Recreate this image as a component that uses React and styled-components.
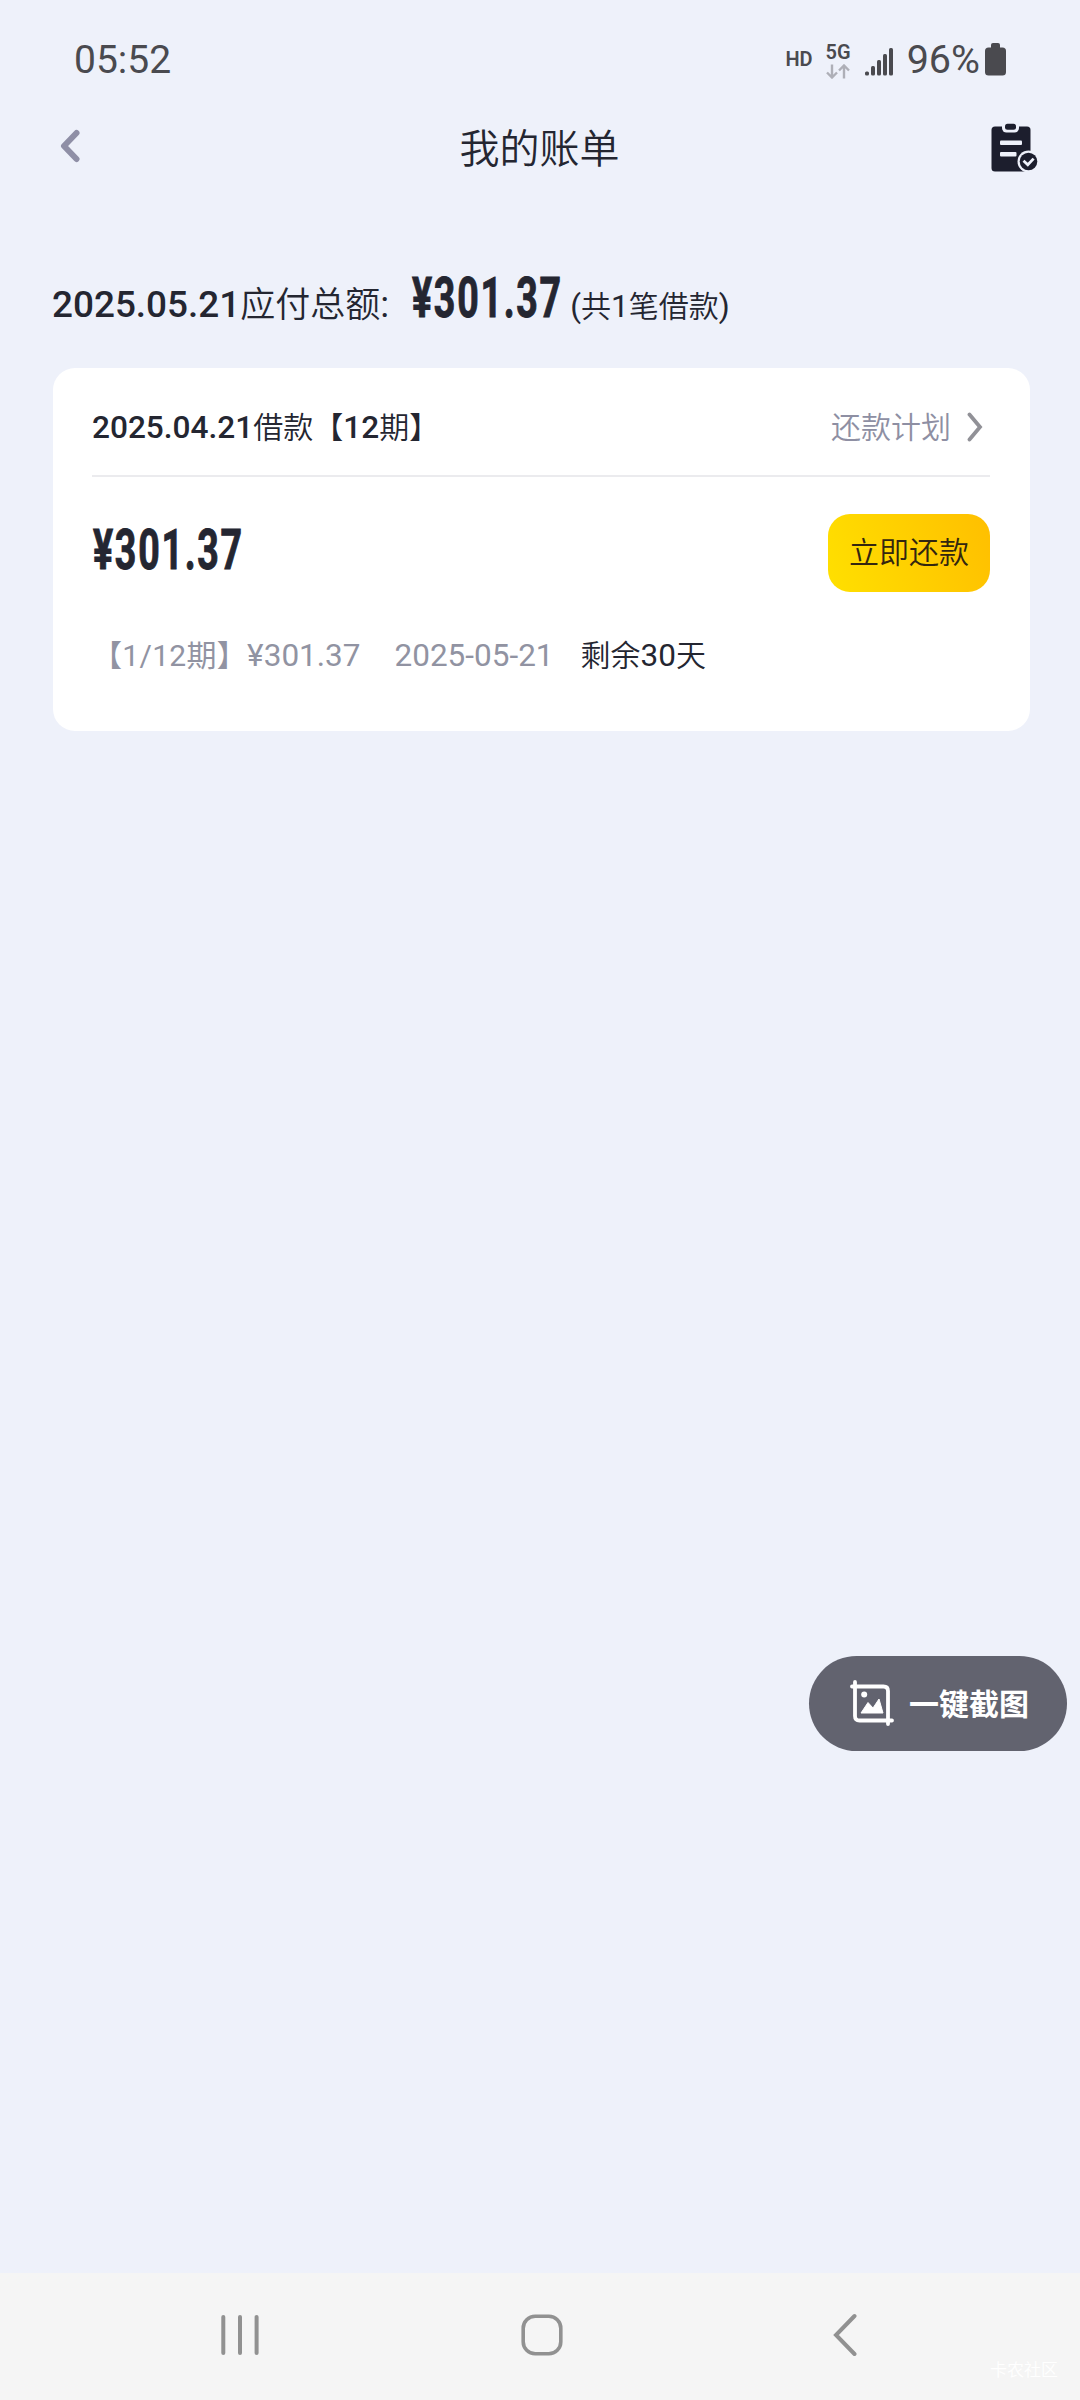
import React from "react";
import styled, { createGlobalStyle } from "styled-components";

const bills = [
  {
    id: 1,
    date: "2025.04.21",
    periods: 12,
    current: 1,
    amount: "301.37",
    dueDate: "2025-05-21",
    daysLeft: 30,
  },
];

const StatusBar = () => (
  <StatusRow>
    <Clock>05:52</Clock>
    <StatusIcons>
      <Label>HD</Label>
      <Network>
        <Label>5G</Label>
        <svg width="24" height="15" viewBox="0 0 24 15" fill="none">
          <path
            d="M6 0.5V13M1 8.5L6 13.5L11 8.5M18 14.5V2M13 6.5L18 1.5L23 6.5"
            stroke="#aeafb7"
            strokeWidth="2.4"
          />
        </svg>
      </Network>
      <Signal width="28" height="28" viewBox="0 0 28 28" fill="#4a4a4f">
        <rect x="0" y="23.5" width="4" height="4" rx="1.5" />
        <rect x="6" y="18" width="4" height="9.5" rx="1.5" />
        <rect x="12" y="12" width="4" height="15.5" rx="1.5" />
        <rect x="18" y="6" width="4" height="21.5" rx="1.5" />
        <rect x="24" y="0" width="4" height="27.5" rx="1.5" />
      </Signal>
      <Percent>96%</Percent>
      <Battery width="21" height="33" viewBox="0 0 21 33" fill="#4a4a4f">
        <rect x="6" y="0" width="9" height="8" rx="2" />
        <rect x="0" y="4.5" width="21" height="28" rx="3.5" />
      </Battery>
    </StatusIcons>
  </StatusRow>
);

const ClipboardIcon = () => (
  <svg width="48" height="50" viewBox="0 0 48 50" fill="#1c1e2d">
    <rect x="0.5" y="3.5" width="39" height="45" rx="3.5" />
    <rect x="11" y="-2" width="17" height="11.5" rx="4.5" fill="#eef1fa" />
    <rect x="14" y="0.8" width="11" height="6" rx="2.5" />
    <rect x="9" y="17.5" width="22" height="4.4" rx="1" fill="#eef1fa" />
    <rect x="9" y="29" width="16.5" height="4.4" rx="1" fill="#eef1fa" />
    <circle cx="37.5" cy="38.5" r="11" fill="#eef1fa" />
    <circle cx="37.5" cy="38.5" r="8.8" />
    <path
      d="M32.5 37.8L36.8 41.8L42.6 35.6"
      fill="none"
      stroke="#eef1fa"
      strokeWidth="2.8"
    />
  </svg>
);

const BillCard = ({ bill }) => (
  <Card>
    <CardHeader>
      <CardTitle>
        <b>{bill.date}</b>借款【<b>{bill.periods}</b>期】
      </CardTitle>
      <PlanLink>
        <span>还款计划</span>
        <svg width="16" height="30" viewBox="0 0 16 30" fill="none">
          <path
            d="M2.5 2.5L13 15L2.5 27.5"
            stroke="#919197"
            strokeWidth="3.8"
            strokeLinecap="round"
          />
        </svg>
      </PlanLink>
    </CardHeader>
    <PayRow>
      <Amount>
        <span>¥{bill.amount}</span>
      </Amount>
      <PayButton type="button">立即还款</PayButton>
    </PayRow>
    <Details>
      <Period>
        【{bill.current}/{bill.periods}期】
      </Period>
      <Money>¥{bill.amount}</Money>
      <DueDate>{bill.dueDate}</DueDate>
      <DaysLeft>
        剩余<Figure>{bill.daysLeft}</Figure>天
      </DaysLeft>
    </Details>
  </Card>
);

const App = () => {
  return (
    <Screen>
      <GlobalStyle />
      <StatusBar />
      <Header>
        <IconButton type="button" aria-label="返回">
          <svg width="20" height="34" viewBox="0 0 20 34" fill="none">
            <path
              d="M16.5 4L4 17L16.5 30"
              stroke="#8f8fa6"
              strokeWidth="6"
              strokeLinecap="round"
              strokeLinejoin="round"
            />
          </svg>
        </IconButton>
        <Title>我的账单</Title>
        <IconButton type="button" aria-label="账单记录">
          <ClipboardIcon />
        </IconButton>
      </Header>

      <Summary>
        <SummaryDate>
          <b>2025.05.21</b>应付总额<Figure>:</Figure>
        </SummaryDate>
        <Amount>
          <span>¥301.37</span>
        </Amount>
        <Count>
          <Figure>(</Figure>共<Figure>1</Figure>笔借款<Figure>)</Figure>
        </Count>
      </Summary>

      {bills.map(bill => (
        <BillCard key={bill.id} bill={bill} />
      ))}

      <CaptureButton type="button">
        <svg width="44" height="46" viewBox="0 0 44 46" fill="none">
          <path
            d="M5 2V36Q5 40.5 9.5 40.5H42M2 6.5H33.5Q38 6.5 38 11V44"
            stroke="#fff"
            strokeWidth="3.8"
            strokeLinecap="round"
          />
          <circle cx="14.2" cy="14.5" r="3" fill="#fff" />
          <path
            d="M11 33L18 22.5L23 28L29 19L33 33Z"
            fill="#fff"
            stroke="#fff"
            strokeWidth="1"
            strokeLinejoin="round"
          />
        </svg>
        <span>一键截图</span>
      </CaptureButton>

      <NavBar>
        <svg width="40" height="42" viewBox="0 0 40 42" fill="#919191">
          <rect x="1.3" y="1" width="4" height="40" rx="2" />
          <rect x="18" y="1" width="4" height="40" rx="2" />
          <rect x="34.6" y="1" width="4" height="40" rx="2" />
        </svg>
        <HomeIcon width="42" height="42" viewBox="0 0 42 42" fill="none">
          <rect
            x="2.2"
            y="2.2"
            width="37.6"
            height="37.6"
            rx="12"
            stroke="#919191"
            strokeWidth="3.6"
          />
        </HomeIcon>
        <svg width="24" height="44" viewBox="0 0 24 44" fill="none">
          <path
            d="M21.5 3L3 22L21.5 41"
            stroke="#919191"
            strokeWidth="4"
            strokeLinecap="round"
          />
        </svg>
        <Watermark>卡农社区</Watermark>
      </NavBar>
    </Screen>
  );
};

const GlobalStyle = createGlobalStyle`
  * {
    box-sizing: border-box;
  }

  body {
    margin: 0;
    background: #eef1fa;
  }

  button {
    padding: 0;
    border: 0;
    background: none;
    font: inherit;
    color: inherit;
  }

  svg {
    display: block;
    flex-shrink: 0;
  }
`;

const Screen = styled.div`
  display: flex;
  flex-direction: column;
  width: 1080px;
  height: 2400px;
  background: #eef1fa;
  color: #242631;
  font-family: Roboto, "Noto Sans CJK SC", sans-serif;
  font-weight: 350;
  white-space: nowrap;

  b {
    font-weight: 500;
  }
`;

/* latin digits and marks set inside chinese text */
const Figure = styled.span`
  font-size: 1.05em;
  font-weight: 400;
`;

const StatusRow = styled.div`
  display: flex;
  justify-content: space-between;
  height: 108px;
  padding: 0 74px 0 74px;
  color: #4a4a4f;
`;

const Clock = styled.span`
  font-size: 39px;
  font-weight: 400;
  line-height: 47px;
  padding-top: 37px;
`;

const StatusIcons = styled.div`
  display: flex;
`;

const Label = styled.span`
  font-size: 20px;
  font-weight: 600;
  line-height: 24px;

  ${StatusIcons} > & {
    padding-top: 47px;
  }
`;

const Network = styled.div`
  display: flex;
  flex-direction: column;
  align-items: center;
  padding-top: 40px;
  margin-left: 13px;
`;

const Signal = styled.svg`
  margin: 48px 0 0 14px;
`;

const Percent = styled.span`
  margin-left: 14px;
  padding-top: 36px;
  font-size: 39.5px;
  font-weight: 400;
  line-height: 47px;
`;

const Battery = styled.svg`
  margin: 43px 0 0 5px;
`;

const Header = styled.header`
  display: flex;
  align-items: center;
  justify-content: space-between;
  height: 80px;
  padding: 0 41px 0 60px;
`;

const IconButton = styled.button`
  display: flex;

  &:first-child {
    margin-bottom: 4px;
  }
`;

const Title = styled.h1`
  margin: 4px 0 0 8px;
  font-size: 40px;
  font-weight: 350;
  line-height: 60px;
`;

const Summary = styled.div`
  display: flex;
  align-items: baseline;
  height: 118px;
  margin-top: 62px;
  padding-left: 52px;
`;

const SummaryDate = styled.div`
  font-size: 35px;
  line-height: 110px;

  b {
    font-size: 36.9px;
  }
`;

/* narrow display figures */
const Amount = styled.div`
  width: 150px;
  font-size: 56px;
  font-weight: 700;
  line-height: 78px;

  span {
    display: inline-block;
    letter-spacing: 2.6px;
    transform: scaleX(0.67);
    transform-origin: left;
    -webkit-text-stroke: 1px currentColor;
  }

  ${Summary} & {
    margin-left: 23px;
  }
`;

const Count = styled.div`
  margin-left: 8px;
  font-size: 30px;
  line-height: 110px;
`;

const Card = styled.section`
  height: 363px;
  margin: 0 50px 0 53px;
  padding: 0 40px 0 39px;
  border-radius: 22px;
  background: #fff;
`;

const CardHeader = styled.div`
  display: flex;
  align-items: center;
  justify-content: space-between;
  height: 109px;
  padding-top: 10px;
  border-bottom: 2px solid #ebebee;
`;

const CardTitle = styled.div`
  padding-bottom: 4px;
  font-size: 30px;

  b {
    font-size: 31.6px;
  }
`;

const PlanLink = styled.div`
  display: flex;
  align-items: center;
  gap: 16px;
  padding-right: 7px;
  font-size: 30px;
  color: #8e8fa3;

  span {
    padding-bottom: 4px;
  }
`;

const PayRow = styled.div`
  display: flex;
  align-items: center;
  justify-content: space-between;
  height: 78px;
  margin-top: 37px;

  ${Amount} {
    margin-left: 1px;
    padding-bottom: 6px;
  }
`;

const PayButton = styled.button`
  width: 162px;
  height: 78px;
  padding-bottom: 6px;
  border-radius: 22px;
  background: linear-gradient(70deg, #ffe000, #ffbf00);
  font-size: 30px;
  color: #33260f;
`;

const Details = styled.div`
  display: flex;
  align-items: baseline;
  margin-top: 42px;
  font-size: 30px;
  line-height: 44px;
  color: #9193a2;
`;

const Period = styled.span`
  letter-spacing: 0.3px;
  font-weight: 400;
`;

const Money = styled.span`
  font-size: 31.5px;
  font-weight: 400;
`;

const DueDate = styled.span`
  margin-left: 34px;
  font-size: 31.5px;
  font-weight: 400;
`;

const DaysLeft = styled.span`
  margin-left: 27px;
  color: #242631;
`;

const CaptureButton = styled.button`
  display: flex;
  align-items: center;
  align-self: flex-end;
  gap: 15px;
  width: 258px;
  height: 95px;
  margin: 925px 13px 0 0;
  padding-left: 41px;
  border-radius: 48px;
  background: #62636f;
  font-size: 30px;
  font-weight: 700;
  color: #fff;

  svg {
    margin-bottom: 2px;
  }

  span {
    padding-bottom: 4px;
  }
`;

const NavBar = styled.nav`
  position: relative;
  display: flex;
  align-items: center;
  justify-content: space-between;
  height: 127px;
  margin-top: auto;
  padding: 0 223px 4px 220px;
  background: #f5f5f5;
`;

const HomeIcon = styled.svg`
  margin-right: 10px;
`;

const Watermark = styled.span`
  position: absolute;
  right: 22px;
  bottom: 17px;
  font-size: 17px;
  line-height: 26px;
  color: #fff;
`;

export default App;
